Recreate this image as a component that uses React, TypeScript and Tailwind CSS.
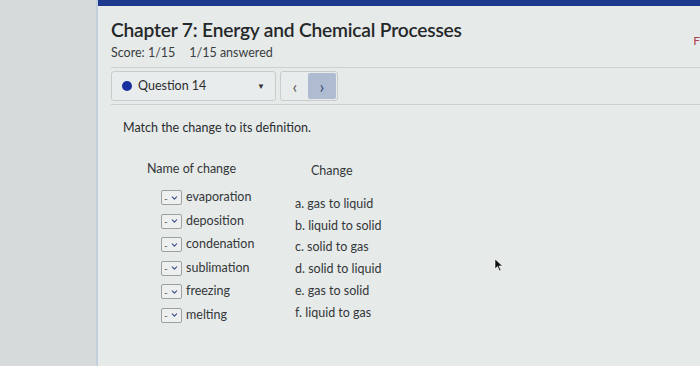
import { ChevronDown } from 'lucide-react';

const names = ['evaporation', 'deposition', 'condenation', 'sublimation', 'freezing', 'melting'];
const changes = ['a. gas to liquid', 'b. liquid to solid', 'c. solid to gas', 'd. solid to liquid', 'e. gas to solid', 'f. liquid to gas'];

function MiniSelect() {
    return (
        <div className="flex items-center h-[15px] w-[21px] border border-[#9aa0a4] bg-[#eef0ef] rounded-[2px] px-[2px] text-[10px] leading-none text-[#555]">
            <span className="w-[7px]">-</span>
            <ChevronDown size={10} strokeWidth={3} className="text-[#3a4a8a]" />
        </div>
    );
}

export default function App() {
    return (
        <div className="w-[700px] h-[366px] overflow-hidden flex bg-[#d9dddd] font-['Lato','Open_Sans',sans-serif] text-[#2e3133]">
            {/* left gutter */}
            <div className="w-[96px] shrink-0 bg-[#d6dada]" />

            {/* main panel */}
            <div className="flex-1 flex flex-col bg-[#e6eae9] border-l-2 border-[#c3cfdc] relative">
                <div className="h-[6px] bg-[#1d3a8f]" />

                <div className="pl-[13px] pt-[11px]">
                    <h1 className="text-[19.2px] font-semibold leading-[26px] tracking-[-0.2px] text-[#25282a]">
                        Chapter 7: Energy and Chemical Processes
                    </h1>
                    <div className="flex gap-[14px] text-[12.5px] leading-[18px] text-[#3a3d3f] mt-[1px]">
                        <span>Score: 1/15</span>
                        <span>1/15 answered</span>
                    </div>
                </div>

                <div className="mt-[5px] ml-[13px] border-t border-b border-[#cdd1d1] py-[3px] flex items-center gap-[4px]">
                    <div className="w-[165px] h-[30px] border border-[#c8cccc] rounded-[3px] flex items-center px-[10px] bg-[#e9ecec]">
                        <span className="w-[10px] h-[10px] rounded-full bg-[#1a2fa0] mr-[6px]" />
                        <span className="text-[12.5px] text-[#2b2e30]">Question 14</span>
                        <span className="ml-auto text-[8px] text-[#333]">▼</span>
                    </div>
                    <div className="h-[30px] border border-[#c8cccc] rounded-[3px] flex items-stretch p-[1px] bg-[#e9ecec]">
                        <div className="w-[26px] flex items-center justify-center text-[17px] leading-none text-[#555]">‹</div>
                        <div className="w-[28px] flex items-center justify-center text-[17px] leading-none text-[#3a4a7a] bg-[#aebbd0] rounded-[2px]">›</div>
                    </div>
                </div>

                <div className="pl-[25px] pt-[14px] text-[12.5px] text-[#2b2e30]">Match the change to its definition.</div>

                <div className="flex pl-[49px] pt-[23px] text-[12.5px] text-[#343739]">
                    <div className="w-[148px]">
                        <div className="leading-[16px]">Name of change</div>
                        <div className="flex flex-col gap-[7.5px] mt-[13px] pl-[14px]">
                            {names.map(n => (
                                <div key={n} className="flex items-center gap-[4px] h-[16px]">
                                    <MiniSelect />
                                    <span>{n}</span>
                                </div>
                            ))}
                        </div>
                    </div>
                    <div className="pt-[2px]">
                        <div className="leading-[16px] pl-[16px]">Change</div>
                        <div className="flex flex-col gap-[5.8px] mt-[17px]">
                            {changes.map(c => (
                                <div key={c} className="h-[16px] leading-[16px]">{c}</div>
                            ))}
                        </div>
                    </div>
                </div>

                {/* mouse cursor */}
                <svg className="absolute left-[396px] top-[258px]" width="10" height="14" viewBox="0 0 10 14">
                    <path d="M1 1 L1 11 L3.5 8.5 L5.5 13 L7 12.3 L5 8 L8.5 8 Z" fill="#111" stroke="#fff" strokeWidth="0.6" />
                </svg>

                {/* red letter at right edge */}
                <span className="absolute right-[0px] top-[32px] text-[12px] text-[#b04050]">F</span>
            </div>
        </div>
    );
}
